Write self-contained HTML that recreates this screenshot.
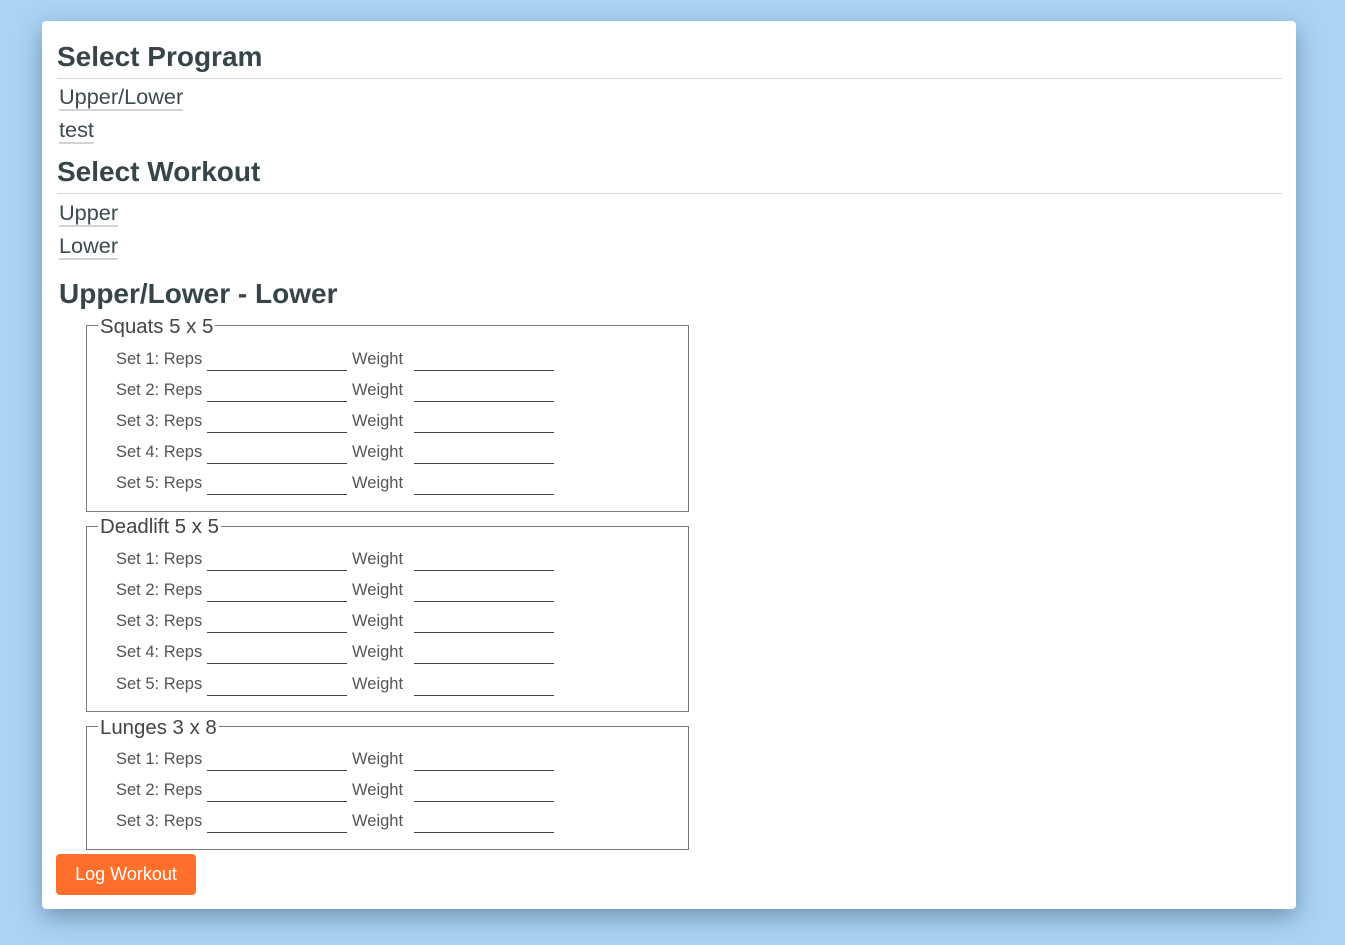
<!DOCTYPE html>
<html><head><meta charset="utf-8"><style>
*{margin:0;padding:0;box-sizing:border-box}
body{width:1345px;height:945px;background:#abd3f4;font-family:"Liberation Sans",sans-serif;position:relative;overflow:hidden;color:#36454a}
.card{position:absolute;left:42px;top:21px;width:1254px;height:888px;background:#fff;border-radius:4px;box-shadow:0 8px 24px rgba(40,70,100,.45)}
.a{position:absolute;white-space:nowrap}
h2{position:absolute;font-size:28px;font-weight:bold;color:#36454a;line-height:32px}
.rule{position:absolute;left:57px;width:1225px;height:1px;background:#d4d6d8}
.lnk{position:absolute;left:59px;font-size:21.7px;line-height:24px;color:#3c4a50;border-bottom:2px solid #d0d4d8;padding-bottom:0}
.fs{position:absolute;left:86px;width:603px;border:1.5px solid #7a7a7a}
.lg{position:absolute;left:98px;font-size:20.4px;line-height:22px;background:#fff;padding:0 2px;color:#444}
.lab{position:absolute;font-size:16.5px;line-height:20px;color:#555}
.in{position:absolute;width:140px;height:1px;background:#444}
.btn{position:absolute;left:56px;top:854px;width:140px;height:41px;background:#fd6f2b;border-radius:4px;color:#fff;font-size:18px;line-height:41px;text-align:center}
</style></head><body>
<div class="card"></div>
<h2 style="left:57px;top:41px">Select Program</h2>
<div class="rule" style="top:78px"></div>
<div class="lnk" style="top:85px">Upper/Lower</div>
<div class="lnk" style="top:118px">test</div>
<h2 style="left:57px;top:156px">Select Workout</h2>
<div class="rule" style="top:193px"></div>
<div class="lnk" style="top:201px">Upper</div>
<div class="lnk" style="top:234px">Lower</div>
<h2 style="left:59px;top:278px">Upper/Lower - Lower</h2>

<div class="fs" style="top:325px;height:187px"></div>
<div class="lg" style="top:316px">Squats 5 x 5</div>
<div class="fs" style="top:526px;height:186px"></div>
<div class="lg" style="top:516px">Deadlift 5 x 5</div>
<div class="fs" style="top:726px;height:124px"></div>
<div class="lg" style="top:717px">Lunges 3 x 8</div>

<div id="rows"></div>
<script>
var ys=[358,389,420,451,482,558,589,620,651,683,758,789,820],n=[1,2,3,4,5,1,2,3,4,5,1,2,3],h='';
for(var i=0;i<ys.length;i++){var y=ys[i];
h+='<div class="lab a" style="left:116px;top:'+(y-9)+'px">Set '+n[i]+': Reps</div>';
h+='<div class="in" style="left:207px;top:'+(y+12)+'px"></div>';
h+='<div class="lab a" style="left:352px;top:'+(y-9)+'px">Weight</div>';
h+='<div class="in" style="left:414px;top:'+(y+12)+'px"></div>';}
document.getElementById('rows').innerHTML=h;
</script>
<div class="btn">Log Workout</div>
</body></html>
